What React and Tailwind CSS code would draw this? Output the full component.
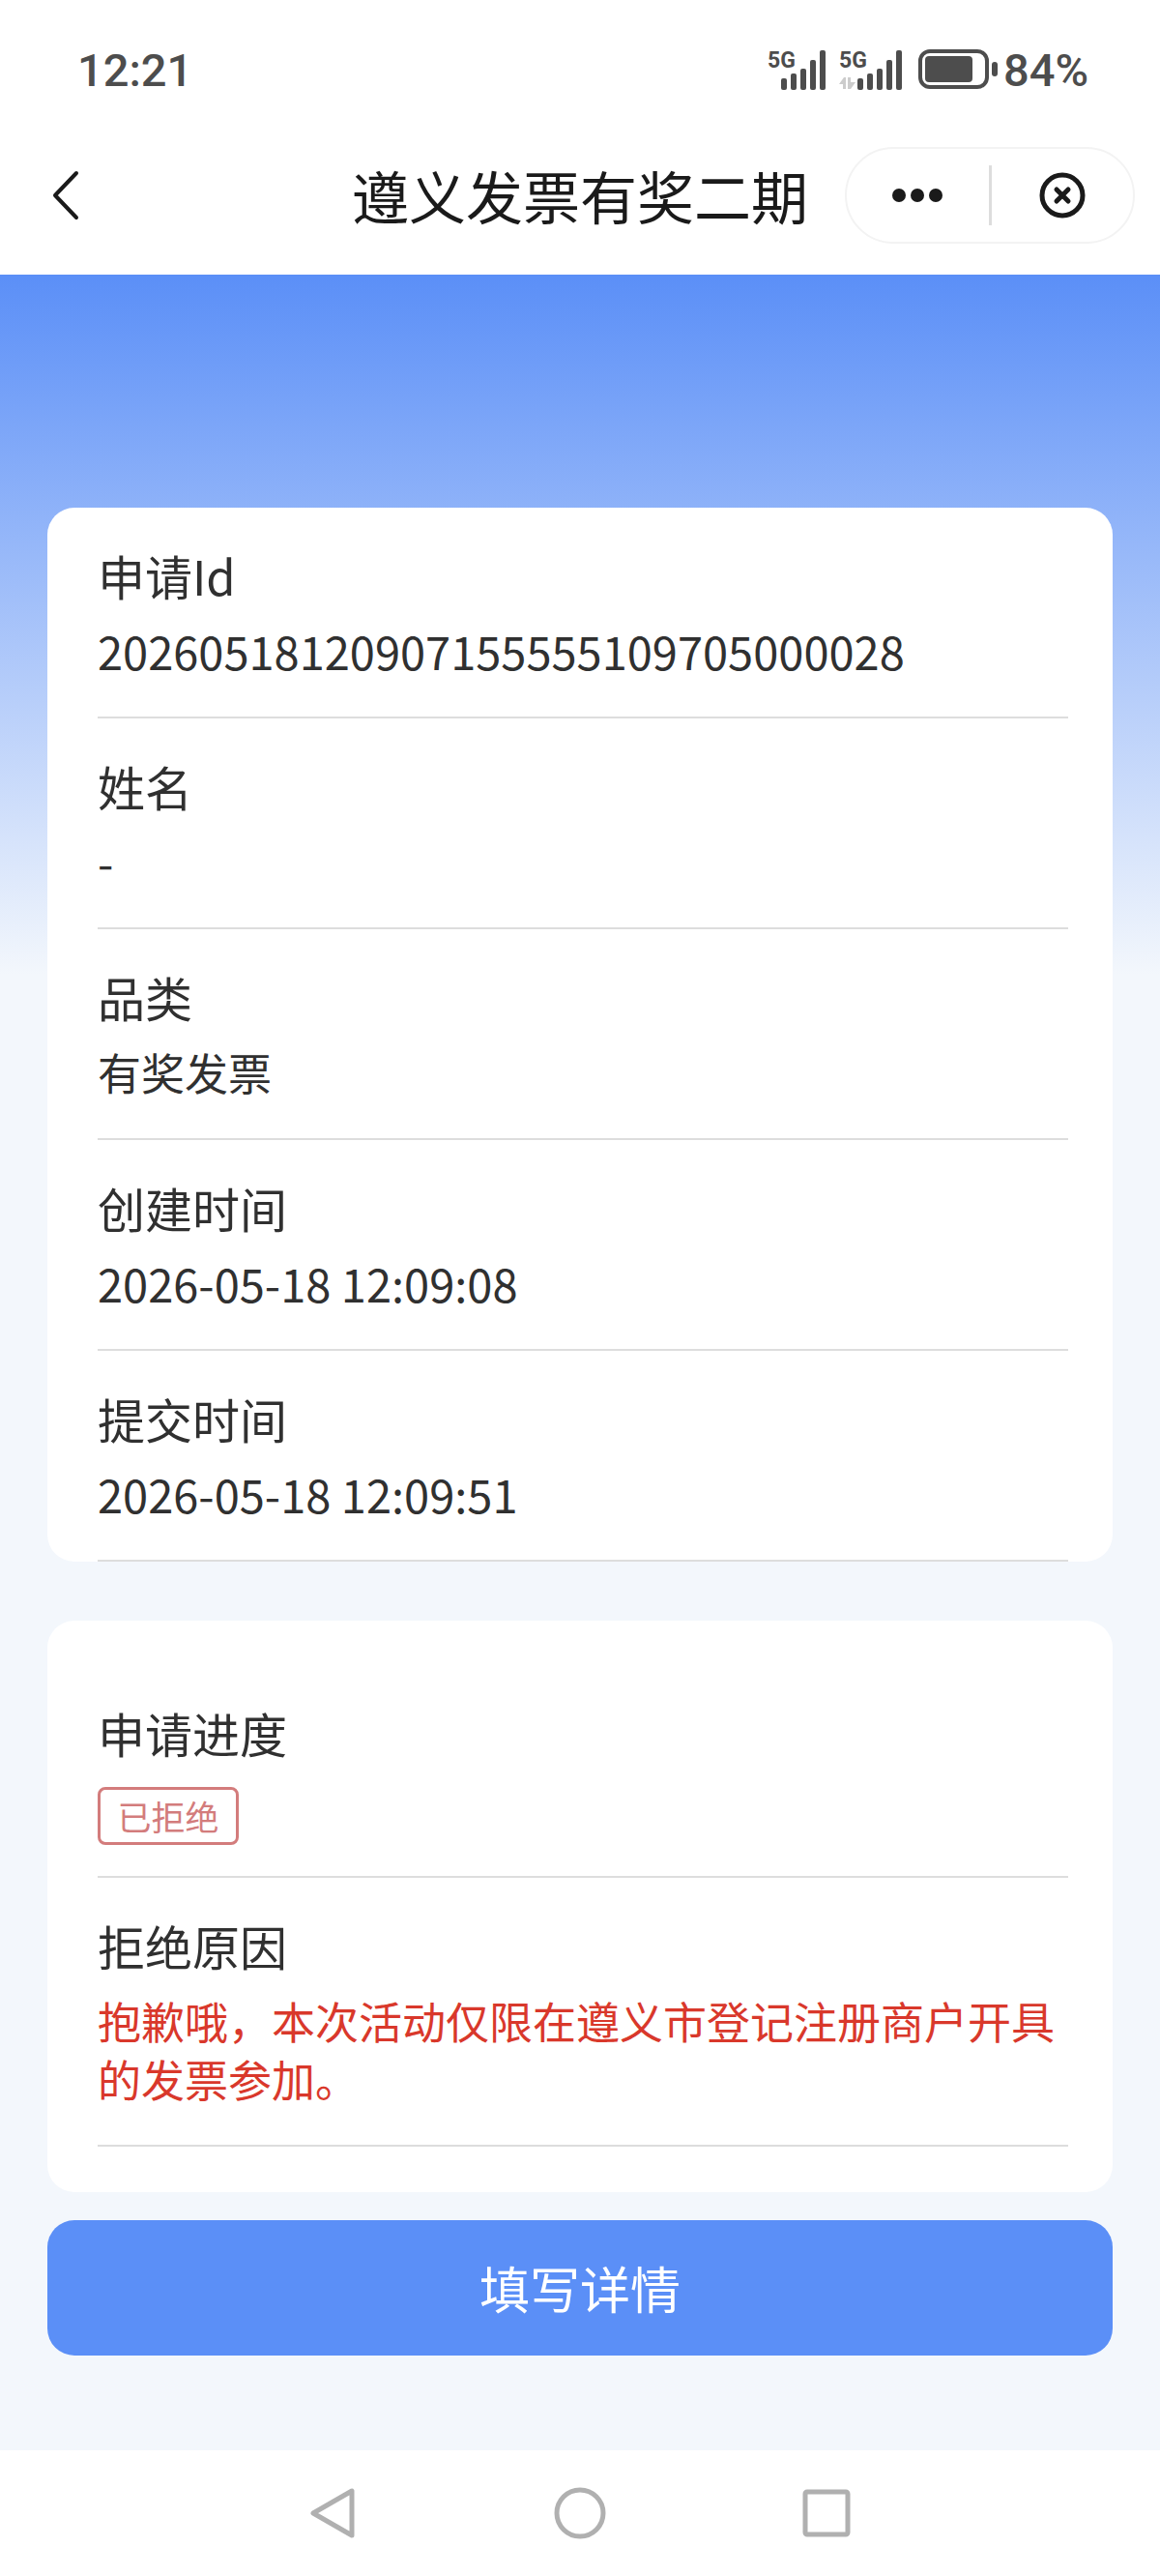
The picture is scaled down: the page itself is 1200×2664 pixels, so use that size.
import React from "react";

const details = [
  { label: "申请Id", value: "20260518120907155555109705000028", numeric: true },
  { label: "姓名", value: "-", numeric: true },
  { label: "品类", value: "有奖发票" },
  { label: "创建时间", value: "2026-05-18 12:09:08", numeric: true },
  { label: "提交时间", value: "2026-05-18 12:09:51", numeric: true },
];

function SignalIcon({ activity = false }) {
  // the second SIM leaves room for the data arrows left of the bars
  const x = activity ? 19 : 14;
  return (
    <svg className="shrink-0" width={activity ? 66 : 61} height="60" viewBox={activity ? "0 -8 66 60" : "0 -8 61 60"} fill="currentColor">
      <text x="0" y="20" fontSize="23" fontWeight="700" fontFamily="Roboto, sans-serif">5G</text>
      <rect x={x} y="31" width="6" height="12" rx="2" />
      <rect x={x + 10} y="26" width="6" height="17" rx="2" />
      <rect x={x + 20} y="21" width="6" height="22" rx="2" />
      <rect x={x + 30} y="12" width="6" height="31" rx="2" />
      <rect x={x + 40} y="2" width="6" height="41" rx="2" />
      {activity && (
        <path d="M0 37L5 30H7V42H4V37ZM9 30H12V35H17L12 42H9Z" fill="#cccccc" />
      )}
    </svg>
  );
}

function BatteryIcon() {
  return (
    <svg className="shrink-0" width="82" height="44" viewBox="0 0 82 44">
      <rect x="2" y="3" width="69" height="37" rx="10" fill="none" stroke="currentColor" strokeWidth="4" />
      <rect x="7" y="8" width="49" height="27" rx="4" fill="currentColor" />
      <rect x="76" y="14" width="6" height="15" rx="3" fill="currentColor" />
    </svg>
  );
}

function StatusBar() {
  return (
    <div className="flex h-36 items-center justify-between pl-20 pr-[74px] font-[Roboto,sans-serif] text-[47px] font-medium leading-none text-[#4d4d4d]">
      <time>12:21</time>
      <div className="flex items-center">
        <SignalIcon />
        <span className="w-[13px]" />
        <SignalIcon activity />
        <span className="w-4" />
        <BatteryIcon />
        <span className="ml-1.5">84%</span>
      </div>
    </div>
  );
}

function TitleBar() {
  return (
    <div className="grid grid-cols-[1fr_auto_1fr] items-center pb-8 pt-2 text-[#1a1a1a]">
      <button type="button" aria-label="返回" className="ml-[52px] w-8">
        <svg width="32" height="56" viewBox="0 0 32 56" fill="none" stroke="currentColor" strokeWidth="4" strokeLinecap="round" strokeLinejoin="round">
          <path d="M27 5L5 28L27 51" />
        </svg>
      </button>
      <h1 className="text-[59px] leading-[72px]">遵义发票有奖二期</h1>
      <div className="mr-[26px] flex h-[100px] w-[300px] items-center justify-self-end rounded-full border-2 border-[#f3f3f3]">
        <button type="button" aria-label="更多" className="flex flex-1 justify-center">
          <svg width="54" height="16" viewBox="0 0 54 16" fill="currentColor">
            <circle cx="8" cy="8" r="7" />
            <circle cx="27" cy="8" r="7" />
            <circle cx="46" cy="8" r="7" />
          </svg>
        </button>
        <span className="h-[62px] w-[3px] bg-[#dddddd]" />
        <button type="button" aria-label="关闭" className="flex flex-1 justify-center">
          <svg width="48" height="48" viewBox="0 0 48 48" fill="none" stroke="currentColor" strokeWidth="5" strokeLinecap="round">
            <circle cx="24" cy="24" r="21" />
            <path d="M18 18L30 30M30 18L18 30" />
          </svg>
        </button>
      </div>
    </div>
  );
}

function Field({ label, padding = "pb-[38px]", textSize = "text-[45px]", children }) {
  return (
    <div className={`border-b-2 border-[#dddddd] pt-[34px] ${padding}`}>
      <dt className="text-[49px] leading-[72px]">{label}</dt>
      <dd className={`mt-3 leading-[60px] ${textSize}`}>{children}</dd>
    </div>
  );
}

function NavBar() {
  return (
    <nav className="flex h-[130px] items-center justify-center gap-[199px] bg-white text-[#b0b0b0]">
      <button type="button" aria-label="后退">
        <svg width="56" height="56" viewBox="0 0 56 56" fill="none" stroke="currentColor" strokeWidth="5" strokeLinejoin="round">
          <path d="M47 5V51L7 28Z" />
        </svg>
      </button>
      <button type="button" aria-label="主页">
        <svg width="56" height="56" viewBox="0 0 56 56" fill="none" stroke="currentColor" strokeWidth="5">
          <circle cx="28" cy="28" r="24" />
        </svg>
      </button>
      <button type="button" aria-label="最近任务">
        <svg width="56" height="56" viewBox="0 0 56 56" fill="none" stroke="currentColor" strokeWidth="5">
          <rect x="6" y="6" width="44" height="44" rx="2" />
        </svg>
      </button>
    </nav>
  );
}

export default function App() {
  return (
    <div className="flex min-h-screen flex-col bg-white font-['Noto_Sans_CJK_SC',sans-serif] text-[#303030]">
      <header>
        <StatusBar />
        <TitleBar />
      </header>

      <main className="flex-1 bg-[#f3f7fc] bg-[linear-gradient(to_bottom,#5b8ff7,#f3f7fc_724px)] px-[49px] pb-[98px] pt-[241px]">
        <dl className="rounded-[28px] bg-white pl-[52px] pr-[46px]">
          {details.map((item) => (
            <Field key={item.label} label={item.label} textSize={item.numeric ? "text-[47px]" : "text-[45px]"}>
              {item.value}
            </Field>
          ))}
        </dl>

        <dl className="mt-[61px] rounded-[28px] bg-white pb-[47px] pl-[52px] pr-[46px] pt-[46px]">
          <Field label="申请进度" padding="pb-8">
            <span className="mt-5 flex h-[60px] w-[146px] items-center justify-center rounded-lg border-3 border-[#d37c7c] text-[35px] text-[#d37c7c]">
              已拒绝
            </span>
          </Field>
          <Field label="拒绝原因">
            <span className="text-[#d9382b]">抱歉哦，本次活动仅限在遵义市登记注册商户开具的发票参加。</span>
          </Field>
        </dl>

        <button type="button" className="mt-[29px] h-[140px] w-full rounded-[28px] bg-[#5b8ff7] text-[52px] text-white">
          填写详情
        </button>
      </main>

      <NavBar />
    </div>
  );
}
